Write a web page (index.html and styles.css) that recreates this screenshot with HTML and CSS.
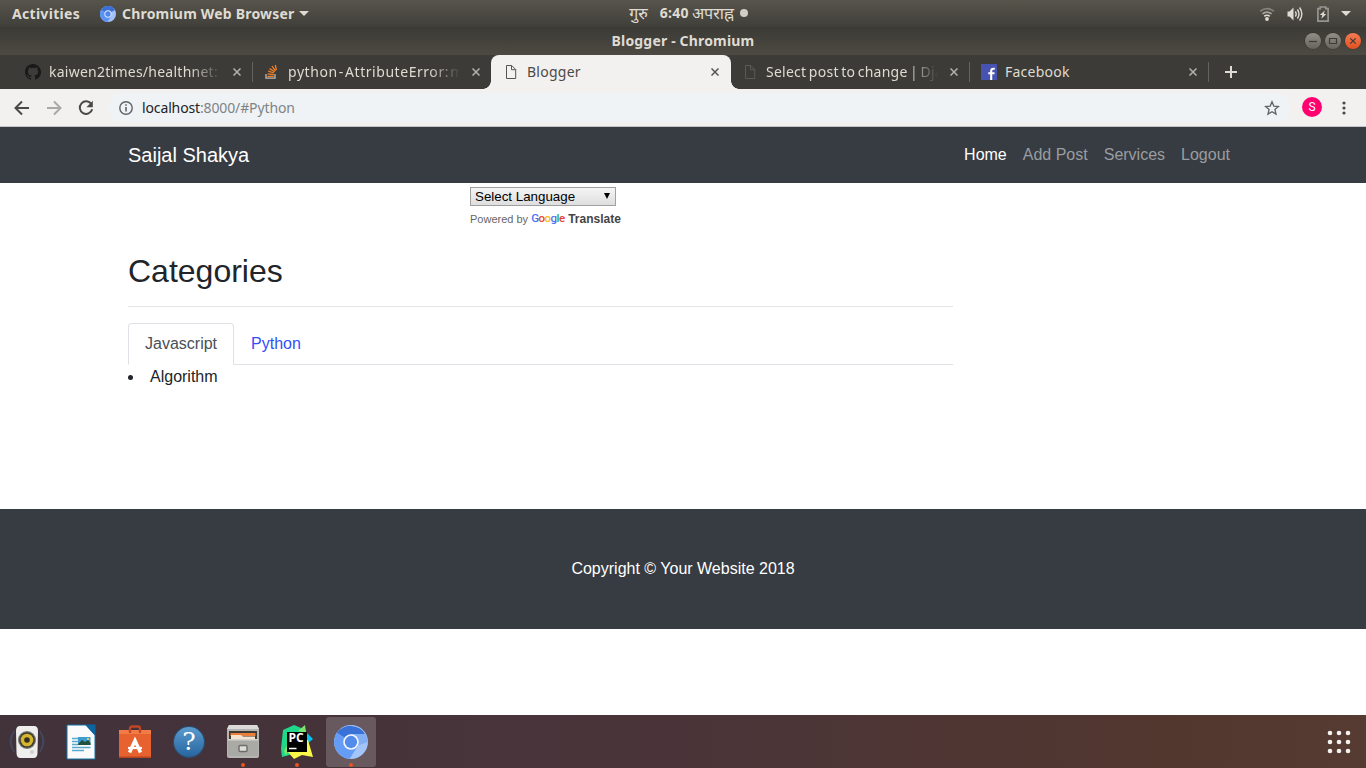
FILE: index.html
```html
<!DOCTYPE html>
<html lang="en">
<head>
<meta charset="utf-8">
<title>Blogger</title>
<link rel="stylesheet" href="styles.css">
</head>
<body>
<div class="screen">
  <header class="topbar">
    <div class="topbar-left">
      <span class="activities">Activities</span>
      <svg class="chromium-small" width="16" height="16" viewBox="0 0 48 48"><circle cx="24" cy="24" r="24" fill="#a4c2f7"/><path d="M24 24L3 12A24 24 0 0 1 45 12z" fill="#3c6fd6"/><path d="M24 24L3 12A24 24 0 0 0 22 48L35 29z" fill="#5b93f5"/><circle cx="24" cy="24" r="11" fill="#dce8ff"/><circle cx="24" cy="24" r="8" fill="#4f86e8"/></svg>
      <span class="app-name">Chromium Web Browser</span>
      <i class="caret"></i>
    </div>
    <div class="clock"><span class="day">गुरु</span><span class="time">6:40</span><span class="period">अपराह्न</span><i class="dot"></i></div>
    <div class="tray">
      <svg width="16" height="16" viewBox="0 0 16 16" fill="none" stroke-width="1.7"><path d="M1.2 5.2Q8 0 14.8 5.2" stroke="#84827c"/><path d="M3.4 7.9Q8 4.4 12.6 7.9" stroke="#a7a49e"/><path d="M5.3 10.2Q8 8.3 10.7 10.2" stroke="#dfdbd2"/><circle cx="8" cy="13" r="1.9" fill="#dfdbd2"/></svg>
      <svg width="16" height="16" viewBox="0 0 16 16" fill="none" stroke="#dfdbd2" stroke-width="1.4"><path d="M.5 5.500h2l4-4v13l-4-4h-2z" fill="#dfdbd2" stroke="none"/><path d="M8.300 5.500q1.800 2.500 0 5M10.400 3.500q3.200 4.500 0 9M12.600 1.500q4.500 6.500 0 13"/></svg>
      <svg width="12" height="16" viewBox="0 0 12 16"><path d="M.9 2.700h2.300V1h5.600v1.700h2.300v12.400H.9z" fill="none" stroke="#979590" stroke-width="1.700"/><path d="M7.800 4.500L2.800 9h2.500l-1 3.800L9.300 8H6.800z" fill="#dfdbd2"/></svg>
      <i class="caret"></i>
    </div>
  </header>

  <div class="titlebar">
    <span class="window-title">Blogger - Chromium</span>
    <div class="window-buttons">
      <i class="wb"><svg viewBox="0 0 16 16"><path d="M4 8.500h8"/></svg></i>
      <i class="wb"><svg viewBox="0 0 16 16"><path d="M4.500 5.500h7v5h-7z"/></svg></i>
      <i class="wb wb-close"><svg viewBox="0 0 16 16"><path d="M5.300 5.300l5.400 5.400M10.700 5.300l-5.400 5.400"/></svg></i>
    </div>
  </div>

  <div class="tabs">
    <div class="tab tab-1">
      <svg width="16" height="16" viewBox="0 0 16 16"><path fill="#191919" d="M8 0C3.58 0 0 3.58 0 8c0 3.54 2.29 6.53 5.47 7.59.4.07.55-.17.55-.38v-1.49c-2.01.37-2.53-.49-2.69-.94-.09-.23-.48-.94-.82-1.13-.28-.15-.68-.52-.01-.53.63-.01 1.08.58 1.23.82.72 1.21 1.87.87 2.33.66.07-.52.28-.87.51-1.07-1.78-.2-3.64-.89-3.64-3.95 0-.87.31-1.59.82-2.15-.08-.2-.36-1.02.08-2.12 0 0 .67-.21 2.2.82a7.6 7.6 0 0 1 4 0c1.53-1.04 2.2-.82 2.2-.82.44 1.1.16 1.92.08 2.12.51.56.82 1.27.82 2.15 0 3.07-1.87 3.75-3.65 3.95.29.25.54.73.54 1.48v2.2c0 .21.15.46.55.38A8 8 0 0 0 8 0z"/></svg>
      <span class="tab-title fade">kaiwen2times/healthnet:</span>
      <svg class="x" viewBox="0 0 8 8"><path d="M.5.5l7 7M7.5.5l-7 7"/></svg>
    </div>
    <div class="tab tab-2">
      <svg width="16" height="16" viewBox="0 0 16 16" fill="none"><path d="M2 10v4.200h9V10" stroke="#bcbbb8" stroke-width="1.300"/><path d="M3.500 12.300h6.200M3.600 9.900l6.200.7M4.200 7.200l5.900 1.800M5.600 4.600l5.100 3.200M8 2.200l3.500 4.600M11.300 1l1.100 5" stroke="#f47f24" stroke-width="1.300"/></svg>
      <span class="tab-title fade">python - AttributeError: m</span>
      <svg class="x" viewBox="0 0 8 8"><path d="M.5.5l7 7M7.5.5l-7 7"/></svg>
    </div>
    <div class="tab tab-active">
      <svg width="16" height="16" viewBox="0 0 16 16" fill="none" stroke="#56544f"><path d="M3.500 1.500h5.200l4 4v9H3.500zM8.500 1.500v4.200h4.200"/></svg>
      <span class="tab-title">Blogger</span>
      <svg class="x" viewBox="0 0 8 8"><path d="M.5.5l7 7M7.5.5l-7 7"/></svg>
    </div>
    <div class="tab tab-4">
      <svg width="16" height="16" viewBox="0 0 16 16" fill="none" stroke="#5b5a56"><path d="M3.500 1.500h5.200l4 4v9H3.500zM8.500 1.500v4.200h4.200"/></svg>
      <span class="tab-title fade">Select post to change | Dja</span>
      <svg class="x" viewBox="0 0 8 8"><path d="M.5.5l7 7M7.5.5l-7 7"/></svg>
    </div>
    <div class="tab tab-5">
      <svg width="16" height="16" viewBox="0 0 16 16"><path fill="#4753b0" d="M0 0h16v16H0z"/><path d="M10.200 16V7q0-2.200 2.200-2.200h1.400M7.300 9.200h6.200" fill="none" stroke="#fff" stroke-width="2.100"/></svg>
      <span class="tab-title">Facebook</span>
      <svg class="x" viewBox="0 0 8 8"><path d="M.5.5l7 7M7.5.5l-7 7"/></svg>
    </div>
    <svg class="new-tab" width="12" height="12" viewBox="0 0 12 12"><path d="M6 0v12M0 6h12" stroke="#dfdbd2" stroke-width="2"/></svg>
  </div>

  <div class="toolbar">
    <div class="nav-icons">
      <svg width="16" height="16" viewBox="0 0 16 16"><path d="M15 8H2M8 1.500L1.500 8 8 14.500" stroke="#4a4947"/></svg>
      <svg width="16" height="16" viewBox="0 0 16 16"><path d="M1 8h13M8 1.500L14.500 8 8 14.500" stroke="#a9a8a5"/></svg>
      <svg width="16" height="16" viewBox="0 0 16 16"><path d="M13.400 4.200A6.300 6.300 0 1 0 14.200 9.300" stroke="#4a4947"/><path d="M14.800.8v6.400H8.400z" fill="#4a4947"/></svg>
    </div>
    <div class="omnibox">
      <svg width="14" height="14" viewBox="0 0 14 14"><circle cx="7" cy="7" r="6.200" fill="none" stroke="#5f6368" stroke-width="1.400"/><path d="M7 6v4.500M7 3.300v1.500" stroke="#5f6368" stroke-width="1.600"/></svg>
      <span class="url"><b>localhost</b>:8000/#Python</span>
      <svg class="star" width="16" height="16" viewBox="0 0 16 16"><path d="M8 1.800l1.800 4.300 4.700.4-3.600 3 1.100 4.600L8 11.700l-4 2.400 1.100-4.600-3.600-3 4.700-.4z" fill="none" stroke="#5f6368" stroke-width="1.300"/></svg>
    </div>
    <span class="avatar">S</span>
    <svg class="menu" width="4" height="14" viewBox="0 0 4 14" fill="#4a4947"><circle cx="2" cy="2" r="1.600"/><circle cx="2" cy="7" r="1.600"/><circle cx="2" cy="12" r="1.600"/></svg>
  </div>

  <main class="page">
    <nav class="navbar">
      <div class="container nav-inner">
        <span class="brand">Saijal Shakya</span>
        <div class="links"><span class="current">Home</span><span>Add Post</span><span>Services</span><span>Logout</span></div>
      </div>
    </nav>
    <div class="translate">
      <div class="select"><span>Select Language</span><i></i></div>
      <div class="powered">Powered by <span class="google"><span class="g1">G</span><span class="g2">o</span><span class="g3">o</span><span class="g1">g</span><span class="g4">l</span><span class="g2">e</span></span><b>Translate</b></div>
    </div>
    <section class="container">
      <div class="categories">
        <h2>Categories</h2>
        <div class="pills"><span class="pill pill-active">Javascript</span><span class="pill">Python</span></div>
        <div class="post"><i></i>Algorithm</div>
      </div>
    </section>
    <footer class="footer">Copyright © Your Website 2018</footer>
  </main>

  <div class="dock">
    <div class="dock-item">
      <svg width="36" height="36" viewBox="0 0 36 36"><g fill="none" stroke="#414a64" stroke-width="1.500"><path d="M5 7q-6 10 0 21M31 7q6 10 0 21" /><path d="M3 10q-4 7 0 15M33 10q4 7 0 15" opacity=".6"/></g><path d="M11 2h14q4 0 4 5L28.500 29q0 5-4 5h-13q-4 0-4-5L7 7q0-5 4-5z" fill="#eeeeec"/><circle cx="18" cy="16" r="9" fill="#77766f"/><circle cx="18" cy="16" r="7.800" fill="#3c3c30"/><circle cx="18" cy="16" r="6.300" fill="#d7b62f"/><circle cx="18" cy="16" r="2.800" fill="#302e25"/><circle cx="23" cy="28" r="2" fill="#d0d0ce"/></svg>
    </div>
    <div class="dock-item">
      <svg width="36" height="36" viewBox="0 0 36 36"><path d="M4 1h19l9 10v24H4z" fill="#fbfbfb" stroke="#1570a5"/><path d="M22 .5h10.500V12z" fill="#0c659e"/><path d="M9 14.500h6M9 17.500h6M9 20.500h6M9 23.500h18.500M9 26.500h12" stroke="#57a9cf" stroke-width="1.600"/><path d="M15 13h12.500v8H15z" fill="#3d9dd0"/><path d="M15 20l4-4 3 2 3-2 2.500 3v2H15z" fill="#24513c"/><circle cx="25" cy="15" r="1" fill="#ffe35d"/></svg>
    </div>
    <div class="dock-item">
      <svg width="36" height="36" viewBox="0 0 36 36"><path d="M2 6h32v28H2z" fill="#e7622f"/><path d="M2 6h32v4H2z" fill="#f27b47"/><path d="M2 32.500h32V34H2z" fill="#b94520"/><path d="M13 9V4.500q0-2 2-2h6q2 0 2 2V9" fill="none" stroke="#bd4724" stroke-width="2.300"/><path d="M12.500 28.500l5.500-12 5.500 12" fill="none" stroke="#fff" stroke-width="3.400"/><path d="M11 24h14" stroke="#fff" stroke-width="2.200"/></svg>
    </div>
    <div class="dock-item"><span class="help">?</span></div>
    <div class="dock-item running">
      <svg width="36" height="36" viewBox="0 0 36 36"><path d="M4 1h28l2 4v27q0 2-2 2H4q-2 0-2-2V5z" fill="#b5b5b2"/><path d="M4 1h28l2 4H2z" fill="#dadad8"/><path d="M4 7h28v8H4z" fill="#3e3935"/><path d="M5.500 9h25v3h-25z" fill="#e9803a"/><path d="M6 11h10l2 1.500h12V15H6z" fill="#f5e2cf"/><path d="M3 15h30v17H3z" fill="#a9a9a6"/><path d="M3 15h30v1.500H3z" fill="#d2d2cf"/><rect x="14" y="21.500" width="8" height="6" rx="1" fill="#deded9" stroke="#6c6c69" stroke-width="1.400"/></svg>
    </div>
    <div class="dock-item running">
      <svg width="36" height="36" viewBox="0 0 36 36"><path d="M4 6L15 1l12 5v20l-13 4-11 3-1-8z" fill="#21d789"/><path d="M19 7l7-6 1 8zM5 27l9-17-7 22z" fill="#7de66a"/><path d="M28 9l6 6-6 5z" fill="#07c3f2"/><path d="M29 16l5 17-11-2-8 4-6-7 18-12z" fill="#fcf84a"/><path d="M8 8h20v20H8z" fill="#000"/><path d="M10 24.500h7.500" stroke="#fff" stroke-width="1.500"/><text class="pc" x="9.500" y="18">PC</text></svg>
    </div>
    <div class="dock-item running selected">
      <svg width="34" height="34" viewBox="0 0 48 48"><circle cx="24" cy="24" r="24" fill="#a4c5fa"/><path d="M24 24L4 11A24 24 0 0 1 44 13L24 13z" fill="#3971d7"/><path d="M4 11A24 24 0 0 0 22 48L34 29 24 24z" fill="#659cf5"/><path d="M24 13h20q4 6 4 11l-14 5z" fill="#82aef4"/><circle cx="24" cy="24" r="11" fill="#f4f7ff"/><circle cx="24" cy="24" r="8.700" fill="#528be9"/></svg>
    </div>
    <svg class="apps" width="24" height="24" viewBox="0 0 24 24" fill="#f4f2f1"><circle cx="3" cy="3" r="2.300"/><circle cx="12" cy="3" r="2.300"/><circle cx="21" cy="3" r="2.300"/><circle cx="3" cy="12" r="2.300"/><circle cx="12" cy="12" r="2.300"/><circle cx="21" cy="12" r="2.300"/><circle cx="3" cy="21" r="2.300"/><circle cx="12" cy="21" r="2.300"/><circle cx="21" cy="21" r="2.300"/></svg>
  </div>
</div>
</body>
</html>
```
FILE: styles.css
```css
* { box-sizing: border-box; }
body { margin: 0; overflow: hidden; }
.screen { width: 1366px; height: 768px; display: flex; flex-direction: column; background: #fff; font-family: "Noto Sans", sans-serif; font-size: 14px; }
svg { flex: none; display: block; }

.topbar { height: 27px; flex: none; display: grid; grid-template-columns: 1fr auto 1fr; align-items: center; padding: 0 15px 0 12px; background: linear-gradient(#57544b, #403f3a); color: #dfdbd2; font-weight: 700; line-height: 26px; }
.topbar-left { display: flex; align-items: center; }
.activities { width: 88px; letter-spacing: .3px; }
.app-name { width: 173px; margin-left: 6px; margin-right: 4px; letter-spacing: .2px; white-space: nowrap; }
.caret { width: 0; height: 0; border: 5px solid transparent; border-top-color: #dfdbd2; border-bottom: 0; }
.clock { height: 26px; display: flex; align-items: center; margin-left: 14px; line-height: 24px; white-space: nowrap; }
.day, .time, .period { padding-bottom: 2px; }
.day { margin-right: 12px; font-size: 16px; font-weight: 400; }
.time { margin-right: 3px; letter-spacing: .3px; }
.period { font-size: 16px; font-weight: 400; }
.dot { width: 8px; height: 8px; margin-top: -1px; margin-left: 6px; border-radius: 50%; background: #d0cdc6; }
.tray { display: flex; align-items: center; justify-content: flex-end; }
.tray svg { margin-right: 12px; }
.tray svg:nth-child(2) { margin-right: 14px; }

.titlebar { height: 28px; flex: none; display: grid; grid-template-columns: 1fr auto 1fr; align-items: center; padding: 0 5px; background: linear-gradient(#3b3a35, #4d4a43); color: #dfdbd2; }
.window-title { grid-column: 2; padding-bottom: 2px; font-weight: 700; letter-spacing: .17px; }
.window-buttons { display: flex; justify-content: flex-end; gap: 4px; }
.wb { width: 16px; height: 16px; border-radius: 50%; background: linear-gradient(#908e86, #66645d); box-shadow: 0 0 0 .5px #33322e; }
.wb svg { fill: none; stroke: #3c3b37; stroke-width: 1.2; }
.wb-close { background: linear-gradient(#f47b54, #e1501f); }

.tabs { height: 34px; flex: none; display: flex; background: #3c3b37; color: #dfdbd2; }
.tab { display: flex; align-items: center; position: relative; }
.tab-1 { width: 253px; padding-left: 25px; }
.tab-2 { width: 238px; padding-left: 11px; word-spacing: -3px; }
.tab-active { width: 240px; padding-left: 12px; background: #f2f1f0; color: #4c4a46; border-radius: 8px 8px 0 0; }
.tab-active::before, .tab-active::after { content: ""; position: absolute; bottom: 0; width: 8px; height: 8px; }
.tab-active::before { left: -8px; background: radial-gradient(circle at 0 0, transparent 7.5px, #f2f1f0 8px); }
.tab-active::after { right: -8px; background: radial-gradient(circle at 100% 0, transparent 7.5px, #f2f1f0 8px); }
.tab-4 { width: 239px; padding-left: 11px; word-spacing: -1.4px; }
.tab-5 { width: 239px; padding-left: 11px; }
.tab-1::after, .tab-4::after, .tab-5::after { content: ""; position: absolute; right: 0; top: 7px; width: 1px; height: 20px; background: #65635e; }
.tab-title { flex: 1; min-width: 0; margin-left: 8px; margin-right: 8px; padding-bottom: 2px; letter-spacing: .25px; white-space: nowrap; }
.tab-2 .tab-title { letter-spacing: .55px; }
.fade { mask-image: linear-gradient(90deg, #000 80%, transparent 98%); }
.x { width: 8px; height: 8px; margin-right: 12px; fill: none; stroke: #b5b2ab; stroke-width: 1.5; }
.tab-2 .x { margin-right: 11px; }
.tab-active .x { stroke: #56544f; }
.new-tab { margin: 11px 0 0 16px; }

.toolbar { height: 38px; flex: none; display: flex; align-items: center; padding: 0 20px 0 14px; background: #f2f1f0; border-bottom: 1px solid #c4c5c7; }
.nav-icons { display: flex; gap: 16px; }
.nav-icons svg { fill: none; stroke-width: 2; }
.omnibox { width: 1182px; height: 29px; display: flex; align-items: center; margin-left: 14px; padding: 0 10px 0 11px; border-radius: 15px; background: #eff3f5; }
.url { margin-left: 9px; color: #808386; letter-spacing: -.13px; white-space: nowrap; }
.url b { color: #212225; font-weight: 400; }
.star { margin-left: auto; }
.avatar { width: 20px; height: 20px; margin: -1px 20px 0 12px; border-radius: 50%; background: #ff006e; color: #fff; font: 12px/20px Roboto, sans-serif; text-align: center; }

.page { height: 588px; flex: none; display: flex; flex-direction: column; color: #212529; font: 16px/24px "Liberation Sans", Arial, sans-serif; }
.container { width: 1140px; margin: 0 auto; padding: 0 15px; }
.navbar { height: 56px; background: #373b42; }
.nav-inner { height: 56px; display: flex; align-items: center; justify-content: space-between; }
.brand { color: #fff; font-size: 20px; line-height: 30px; }
.links { display: flex; gap: 16px; padding-right: 8px; color: #9a9da0; }
.links .current { color: #fff; }
.translate { height: 53px; padding: 4px 0 0 470px; }
.select { width: 146px; height: 19px; display: flex; align-items: center; justify-content: space-between; padding: 0 5px 0 4px; border: 1px solid #a0a0a0; background: linear-gradient(#f5f5f5, #dedede); color: #000; font-size: 13.333px; line-height: 17px; }
.select i { margin-top: -2px; border: 3.5px solid transparent; border-top: 6px solid #000; border-bottom: 0; }
.powered { display: flex; align-items: center; margin-top: 5px; color: #666; font-size: 11px; line-height: 16px; white-space: pre; }
.powered b { margin-left: 4px; color: #444; font-size: 12px; }
.google { width: 33px; font: 500 11.5px/14px Roboto, sans-serif; letter-spacing: -.5px; padding-bottom: 2px; }
.g1 { color: #4a72f5; } .g2 { color: #eb4335; } .g3 { color: #fbbc05; } .g4 { color: #34a853; }
.categories { width: 825px; height: 273px; padding-top: 16px; }
.categories h2 { margin: 0 0 16px; padding-bottom: 16px; border-bottom: 1px solid #e5e5e5; font-size: 32px; font-weight: 400; line-height: 38px; }
.pills { height: 42px; display: flex; border-bottom: 1px solid #dee2e6; }
.pill { height: 42px; padding: 8px 16px; border: 1px solid transparent; color: #3050f8; }
.pill-active { border-color: #dee2e6 #dee2e6 #fff; border-radius: 4px 4px 0 0; background: #fff; color: #495057; }
.post { display: flex; align-items: center; }
.post i { width: 5px; height: 5px; margin-top: 1px; margin-right: 17px; border-radius: 50%; background: #212529; }
.footer { height: 120px; background: #373b42; color: #fff; line-height: 120px; text-align: center; }

.dock { height: 53px; flex: none; display: flex; align-items: center; gap: 4px; padding: 0 15px 0 2px; background: linear-gradient(90deg, #42323a, #49343a 45%, #52372f 85%, #553b31); }
.dock-item { width: 50px; height: 50px; display: grid; place-items: center; position: relative; border-radius: 3px; }
.selected { background: #67595e; }
.running::after { content: ""; position: absolute; left: 23px; bottom: 0; width: 4px; height: 4px; border-radius: 50%; background: #e95420; }
.help { width: 30px; height: 30px; border-radius: 50%; background: linear-gradient(#5a9bd0, #27659e); box-shadow: 0 0 0 1px #285074; color: #fff; font: 25px/30px "DejaVu Serif", serif; text-align: center; }
.pc { fill: #fff; font: 700 12px "Open Sans", sans-serif; }
.apps { margin-left: auto; }
```
